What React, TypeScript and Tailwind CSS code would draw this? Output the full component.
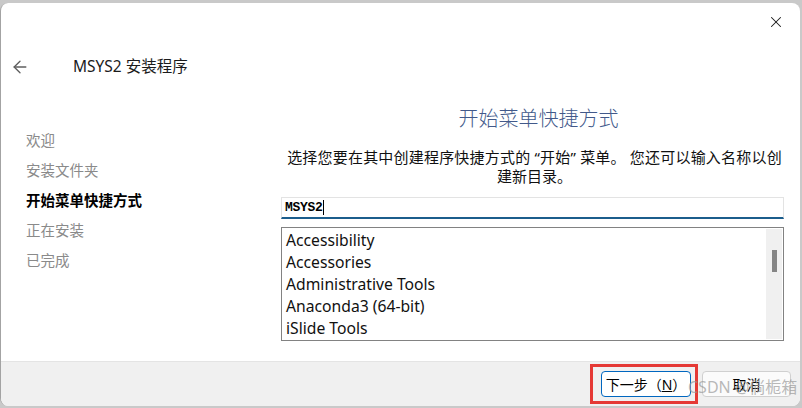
import { ArrowLeft, X } from "lucide-react";

const steps = [
  { label: "欢迎", active: false },
  { label: "安装文件夹", active: false },
  { label: "开始菜单快捷方式", active: true },
  { label: "正在安装", active: false },
  { label: "已完成", active: false },
];

const folders = [
  "Accessibility",
  "Accessories",
  "Administrative Tools",
  "Anaconda3 (64-bit)",
  "iSlide Tools",
];

export default function App() {
  return (
    <div className="w-[802px] h-[408px] bg-[#c9c9c9] pt-[3px] font-['Noto_Sans','Noto_Sans_CJK_SC',sans-serif] overflow-hidden">
      <div className="w-[800px] h-[403px] flex flex-col bg-white rounded-lg border-l border-[#a3a3a3] overflow-hidden">
        {/* title bar */}
        <div className="h-[48px] flex justify-end items-start pt-[10px] pr-[15px]">
          <X className="w-[18px] h-[18px] text-[#1a1a1a]" strokeWidth={1.4} />
        </div>
        <div className="h-[32px] flex items-center">
          <ArrowLeft className="ml-[9px] w-[20px] h-[20px] text-[#5f5f5f]" strokeWidth={1.6} />
          <span className="ml-[43px] text-[15.5px] text-[#1b1b1b]">MSYS2 安装程序</span>
        </div>

        {/* body */}
        <div className="flex-1 flex">
          <div className="w-[280px] pl-[25px] pt-[42px] flex flex-col">
            {steps.map((s) => (
              <div
                key={s.label}
                className={`h-[30px] leading-[30px] text-[14.5px] ${s.active ? "font-bold text-black" : "text-[#8a8a8a]"}`}
              >
                {s.label}
              </div>
            ))}
          </div>

          <div className="w-[503px] pt-[24px] flex flex-col">
            <div className="h-[24px] leading-[24px] text-center pl-[12px] text-[20px] text-[#42598a] font-light">
              开始菜单快捷方式
            </div>
            <div className="mt-[17px] text-center text-[15px] leading-[19px] text-[#111] pl-[4px]">
              <div className="whitespace-nowrap tracking-[0.2px]">
                选择您要在其中创建程序快捷方式的 “开始” 菜单。 您还可以输入名称以创
              </div>
              <div>建新目录。</div>
            </div>
            <div className="mt-[11px] h-[22px] border border-[#e3e3e3] border-b-2 border-b-[#1b5d8c] flex items-center pl-[3px]">
              <span className="font-['Liberation_Mono',monospace] font-bold text-[13px] text-black tracking-[-0.3px]">MSYS2</span>
              <span className="w-px h-[15px] bg-black" />
            </div>
            <div className="mt-[8px] h-[114px] border border-[#828282] flex">
              <div className="flex-1 pl-[4px] pt-[1px]">
                {folders.map((f) => (
                  <div key={f} className="h-[22px] leading-[22px] text-[15.7px] text-[#111]">
                    {f}
                  </div>
                ))}
              </div>
              <div className="w-[16px] bg-[#f0f0f0] my-px mr-px pt-[21px] flex justify-center">
                <div className="w-[5px] h-[22px] bg-[#858585]" />
              </div>
            </div>
          </div>
        </div>

        {/* footer */}
        <div className="h-[45px] bg-[#f0f0f0] border-t border-[#e4e4e4] flex items-center justify-end pr-[9px] gap-[11px] relative">
          <button className="w-[90px] h-[26px] bg-white border border-[#0067c0] rounded text-[14px] text-black">
            下一步（<span className="underline">N</span>）
          </button>
          <button className="w-[89px] h-[26px] bg-[#fbfbfb] border border-[#d0d0d0] rounded text-[14px] text-black">
            取消
          </button>
          <div className="absolute left-[589px] top-[2px] w-[108px] h-[40px] border-[3px] border-[#e53935]" />
          <div className="absolute left-[687px] top-[13px] text-[16px] text-[#9a9a9a]/70 pointer-events-none">CSDN @倘栀箱</div>
        </div>
      </div>
    </div>
  );
}
